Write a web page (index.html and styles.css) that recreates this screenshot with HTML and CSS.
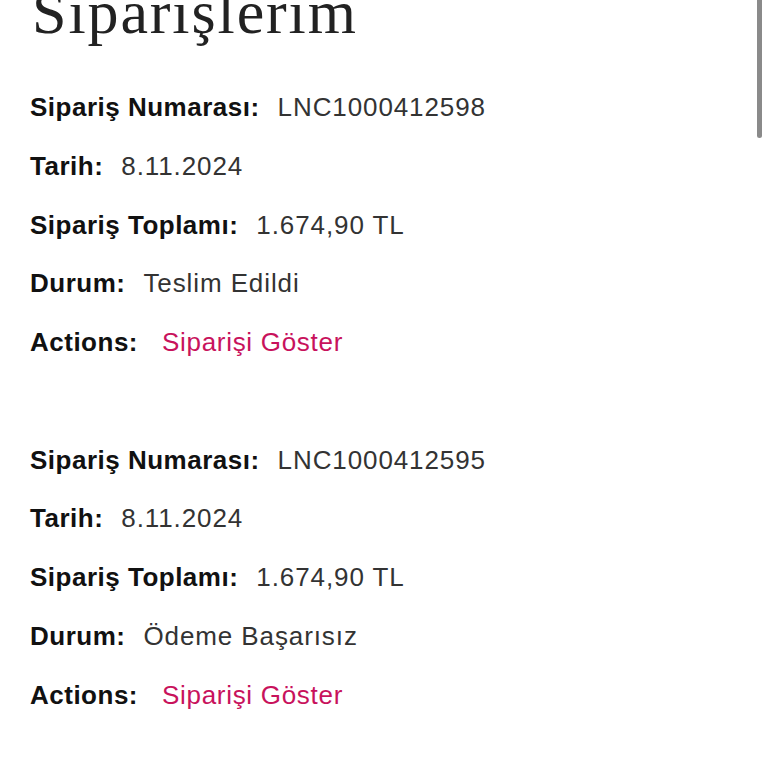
FILE: index.html
```html
<!DOCTYPE html>
<html lang="tr">
<head>
<meta charset="utf-8">
<title>Siparişlerim</title>
<link rel="stylesheet" href="styles.css">
</head>
<body>
<main class="page">
  <h1 class="title">Siparişlerim</h1>
  <section class="order">
    <div class="row"><span class="label">Sipariş Numarası:</span><span class="value">LNC1000412598</span></div>
    <div class="row"><span class="label">Tarih:</span><span class="value">8.11.2024</span></div>
    <div class="row"><span class="label">Sipariş Toplamı:</span><span class="value">1.674,90 TL</span></div>
    <div class="row"><span class="label">Durum:</span><span class="value">Teslim Edildi</span></div>
    <div class="row"><span class="label">Actions:</span><a class="link" href="#">Siparişi Göster</a></div>
  </section>
  <section class="order">
    <div class="row"><span class="label">Sipariş Numarası:</span><span class="value">LNC1000412595</span></div>
    <div class="row"><span class="label">Tarih:</span><span class="value">8.11.2024</span></div>
    <div class="row"><span class="label">Sipariş Toplamı:</span><span class="value">1.674,90 TL</span></div>
    <div class="row"><span class="label">Durum:</span><span class="value">Ödeme Başarısız</span></div>
    <div class="row"><span class="label">Actions:</span><a class="link" href="#">Siparişi Göster</a></div>
  </section>
</main>
<div class="scroll-indicator"></div>
</body>
</html>
```
FILE: styles.css
```css
html, body {
  margin: 0;
  padding: 0;
  background: #fff;
  overflow: hidden;
}
.page {
  padding: 0 0 0 30px;
  font-family: "Liberation Sans", Arial, sans-serif;
}
.title {
  margin: -19px 0 35px 2px;
  font-family: "Liberation Serif", "Times New Roman", serif;
  font-weight: normal;
  font-size: 62px;
  line-height: 62px;
  letter-spacing: 1.9px;
  color: #222;
}
.order {
  margin-bottom: 58.75px;
}
.row {
  display: flex;
  gap: 18px;
  font-size: 26px;
  line-height: 58.75px;
  letter-spacing: 0.5px;
}
.label {
  font-weight: bold;
  color: #111;
}
.value {
  color: #333;
  letter-spacing: 0.9px;
}
.link {
  color: #c8125c;
  text-decoration: none;
  margin-left: 6px;
  letter-spacing: 0.7px;
}
.scroll-indicator {
  position: fixed;
  top: -6px;
  right: 6px;
  width: 5px;
  height: 144px;
  border-radius: 3px;
  background: #8a8a8a;
}
```
